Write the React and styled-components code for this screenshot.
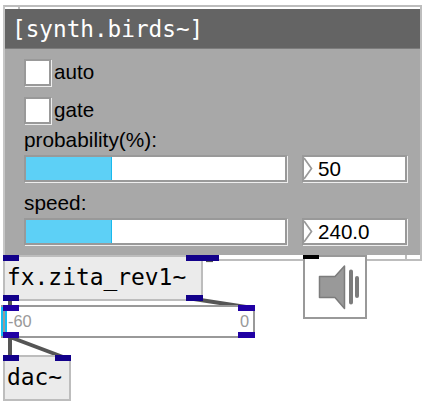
import React from "react";
import styled, { createGlobalStyle } from "styled-components";

const GlobalStyle = createGlobalStyle`
  * { box-sizing: border-box; }
  body { margin: 0; background: #fff; overflow: hidden; }
`;

const Canvas = styled.main`
  position: relative;
  width: 424px;
  height: 407px;
  background: #fff;
  color: #000;
  font-family: "Liberation Sans", Arial, sans-serif;
`;

const Node = styled.div`
  position: absolute;
  left: ${(p) => p.$x}px;
  top: ${(p) => p.$y}px;
`;

const Subpatch = styled.section`
  display: flex;
  flex-direction: column;
  width: 419px;
  height: 256px;
  border: 2px solid #bdbdbd;
  border-left-color: #c6c6c6;
`;

const Rail = styled.div`
  display: flex;
  flex: none;
  justify-content: ${(p) => (p.$end ? "flex-end" : "flex-start")};
  height: ${(p) => p.$h}px;
`;

const Notch = styled.i`
  width: 15px;
  border: 0 solid #bdbdbd;
  border-width: ${(p) => (p.$end ? "0 0 0 2px" : "0 2px 0 0")};
`;

const Title = styled.h1`
  margin: 0;
  height: 40px;
  padding-left: 7px;
  background: #646464;
  border-bottom: 1px solid #7c7c7c;
  color: #fff;
  font: 22.7px/41px "DejaVu Sans Mono", monospace;
  white-space: pre;
`;

const Controls = styled.div`
  flex: 1;
  padding: 10px 12px 0 19px;
  background: #a8a8a8;
`;

const Toggles = styled.div`
  display: flex;
  flex-direction: column;
  gap: 11px;
`;

const ToggleRow = styled.label`
  display: flex;
  align-items: center;
  gap: 3px;
  height: 27px;
`;

const ToggleName = styled.span`
  padding-bottom: 2px;
  font-size: 20.6px;
  line-height: 25px;
`;

const Sunken = styled.div`
  background: #fff;
  border: 2px solid #999;
  box-shadow: 1px 1px 0 #eee;
`;

const Toggle = styled(Sunken)`
  width: 27px;
  height: 27px;
`;

const Parameters = styled.div`
  display: flex;
  flex-direction: column;
  gap: 9px;
  padding-top: 4px;
`;

const Label = styled.div`
  height: 27px;
  line-height: 23px;
  font-size: 20.8px;
`;

const ParameterRow = styled.div`
  display: flex;
  gap: 15px;
`;

const Track = styled(Sunken)`
  width: 263px;
  height: 27px;
`;

const Fill = styled.div`
  width: 86px;
  height: 100%;
  background: #5dd0f6;
  border-right: 1px solid #19b9ed;
`;

const NumberField = styled(Sunken)`
  display: flex;
  align-items: center;
  gap: 5px;
  width: 105px;
  height: 27px;
  font-size: 20.6px;
  line-height: 25px;
`;

const ObjectBox = styled.div`
  display: flex;
  flex-direction: column;
  justify-content: space-between;
  width: ${(p) => p.$w}px;
  height: 46px;
  background: #ebebeb;
  box-shadow: inset 0 0 0 2px #bdbdbd;
`;

const ObjectText = styled.span`
  padding: 0 0 2px 4px;
  font: 22.9px/30px "DejaVu Sans Mono", monospace;
  white-space: pre;
`;

const Ports = styled.div`
  display: flex;
  justify-content: space-between;
  height: 6px;
`;

const Port = styled.i`
  width: ${(p) => p.$w || 16}px;
  height: ${(p) => p.$h || 6}px;
  background: ${(p) => p.$color || "#12008a"};
`;

const GainSlider = styled.div`
  display: flex;
  flex-direction: column;
  justify-content: space-between;
  width: 254px;
  height: 33px;
  padding-left: 2px;
  background: linear-gradient(90deg, #12bdf3 0 2px, #999 2px 4px, #12bdf3 4px 6px, transparent 6px), #fff;
  box-shadow: inset 0 2px 0 #999, inset 0 -2px 0 #999, inset -2px 0 0 #999;
`;

const Range = styled.div`
  display: flex;
  justify-content: space-between;
  padding: 0 6px 1px 5px;
  color: #999;
  font-size: 16.4px;
  line-height: 19px;
`;

const Speaker = styled.div`
  display: flex;
  flex-direction: column;
  width: 64px;
  height: 64px;
  background: #fff;
  box-shadow: inset 0 0 0 2px #999;
`;

const Cables = styled.svg`
  position: absolute;
  left: 0;
  top: 0;
`;

const gainColor = "#2000a4";

const parameters = [
  { name: "probability(%):", value: "50" },
  { name: "speed:", value: "240.0" },
];

function PortPair({ color, lastWidth }) {
  return (
    <Ports>
      <Port $color={color} />
      <Port $color={color} $w={lastWidth} />
    </Ports>
  );
}

export default function App() {
  return (
    <Canvas>
      <GlobalStyle />
      <Node $x={3} $y={5}>
        <Subpatch>
          <Rail $h={2}>
            <Notch />
          </Rail>
          <Title>[synth.birds~]</Title>
          <Controls>
            <Toggles>
              <ToggleRow>
                <Toggle />
                <ToggleName>auto</ToggleName>
              </ToggleRow>
              <ToggleRow>
                <Toggle />
                <ToggleName>gate</ToggleName>
              </ToggleRow>
            </Toggles>
            <Parameters>
              {parameters.map((p) => (
                <div key={p.name}>
                  <Label>{p.name}</Label>
                  <ParameterRow>
                    <Track>
                      <Fill />
                    </Track>
                    <NumberField>
                      <svg width="9" height="23" fill="none" stroke="#999" strokeWidth="1.7">
                        <path d="M0 1 L7.5 11.5 L0 22" />
                      </svg>
                      {p.value}
                    </NumberField>
                  </ParameterRow>
                </div>
              ))}
            </Parameters>
          </Controls>
          <Rail $h={4} $end>
            <Notch $end />
          </Rail>
        </Subpatch>
      </Node>
      <Cables width="424" height="407" stroke="#555" strokeWidth="4" fill="none">
        <path d="M10 299V307M194 299L246 307M10 337V357M10 337L63 357" />
        <path d="M206 261.5H213" strokeWidth="1.2" />
      </Cables>
      <Node $x={203} $y={255}>
        <Ports>
          <Port />
        </Ports>
      </Node>
      <Node $x={3} $y={255}>
        <ObjectBox $w={200}>
          <PortPair lastWidth={17} />
          <ObjectText>fx.zita_rev1~</ObjectText>
          <PortPair lastWidth={17} />
        </ObjectBox>
      </Node>
      <Node $x={1} $y={305}>
        <GainSlider>
          <PortPair color={gainColor} lastWidth={17} />
          <Range>
            <span>-60</span>
            <span>0</span>
          </Range>
          <PortPair color={gainColor} lastWidth={17} />
        </GainSlider>
      </Node>
      <Node $x={3} $y={355}>
        <ObjectBox $w={68}>
          <PortPair />
          <ObjectText>dac~</ObjectText>
          <Ports />
        </ObjectBox>
      </Node>
      <Node $x={303} $y={255}>
        <Speaker>
          <Port $h={4} $color="#000" />
          <svg width="64" height="60" viewBox="303 259 64 60">
            <path d="M319.500 276.500H335L344.500 266V308.500L335 297.500H319.500Z" fill="#999" stroke="#7c7c7c" strokeWidth="1.5" strokeLinejoin="round" />
            <path d="M351 271.500V302.500M357 278V296" stroke="#7c7c7c" strokeWidth="4" strokeLinecap="round" />
          </svg>
        </Speaker>
      </Node>
    </Canvas>
  );
}
